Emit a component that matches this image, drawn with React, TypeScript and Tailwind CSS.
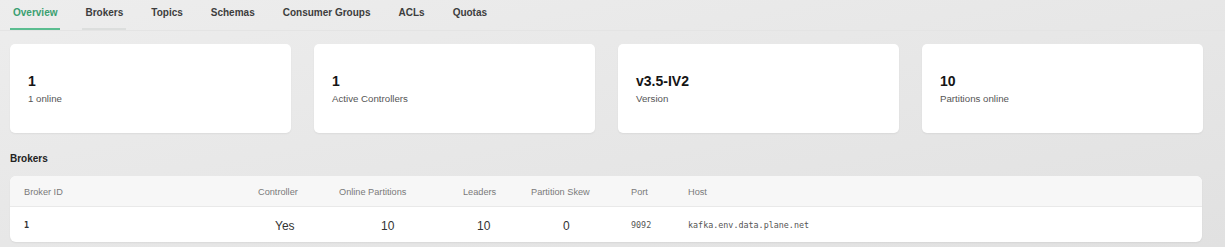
import { useState } from 'react'

const TABS = ['Overview', 'Brokers', 'Topics', 'Schemas', 'Consumer Groups', 'ACLs', 'Quotas']

const STATS = [
  { value: '1', label: '1 online' },
  { value: '1', label: 'Active Controllers' },
  { value: 'v3.5-IV2', label: 'Version' },
  { value: '10', label: 'Partitions online' },
]

const BROKERS = [
  { id: 1, controller: 'Yes', online: 10, leaders: 10, skew: 0, port: 9092, host: 'kafka.env.data.plane.net' },
]

export default function App() {
  const [tab, setTab] = useState('Overview')

  return (
    <div
      className="w-[1225px] h-[247px] overflow-hidden bg-gradient-to-br from-[#ededed] to-[#e1e1e1] font-['Liberation_Sans',Arial,sans-serif] text-[#1a1a1a]"
    >
      {/* tabs */}
      <div className="flex items-end h-[31px] pl-[10px] gap-[22px] border-b border-[#e4e4e4]">
        {TABS.map((t) => (
          <button
            key={t}
            onClick={() => setTab(t)}
            className={`h-full px-[3px] pt-[8px] text-[10px] font-bold cursor-pointer border-b-2 ${
              tab === t
                ? 'text-[#3a9f70] border-[#5bbd90]'
                : t === 'Brokers'
                  ? 'text-[#3d3d3d] border-[#dcdedd]'
                  : 'text-[#3d3d3d] border-transparent'
            }`}
          >
            <span className="block -mt-[3px] mb-[8px]">{t}</span>
          </button>
        ))}
      </div>

      {/* stat cards */}
      <div className="grid grid-cols-4 gap-[23px] pl-[10px] pr-[22px] mt-[13px]">
        {STATS.map((s, i) => (
          <div
            key={i}
            className="h-[89px] bg-white rounded-[5px] shadow-[0_1px_2px_rgba(0,0,0,0.06)] flex flex-col justify-center px-[18px]"
          >
            <div className="text-[14px] leading-[17px] font-bold text-[#151515]">{s.value}</div>
            <div className="text-[9.7px] leading-[13px] text-[#555] mt-[2px]">{s.label}</div>
          </div>
        ))}
      </div>

      {/* brokers table */}
      <div className="pl-[10px] pr-[23px]">
        <div className="text-[10px] font-bold text-[#222] mt-[18px] h-[25px]">Brokers</div>
        <div className="bg-white rounded-[6px] overflow-hidden shadow-[0_1px_2px_rgba(0,0,0,0.06)]">
          <div className="grid grid-cols-[248px_81px_124px_68px_100px_57px_1fr] h-[31px] pt-[3px] items-center bg-[#f7f7f7] border-b border-[#e9e9e9] text-[9.2px] text-[#7a7a7a]">
            <div className="pl-[14px]">Broker ID</div>
            <div>Controller</div>
            <div>Online Partitions</div>
            <div>Leaders</div>
            <div>Partition Skew</div>
            <div>Port</div>
            <div>Host</div>
          </div>
          {BROKERS.map((b) => (
            <div
              key={b.id}
              className="grid grid-cols-[248px_81px_124px_68px_100px_57px_1fr] h-[35px] pt-[2px] items-center text-[#222]"
            >
              <div className="pl-[14px] font-['DejaVu_Sans_Mono',monospace] text-[8.4px] font-bold text-[#333]">{b.id}</div>
              <div className="pl-[17px] text-[12px] text-[#333]">{b.controller}</div>
              <div className="pl-[42px] text-[12px] text-[#333]">{b.online}</div>
              <div className="pl-[14px] text-[12px] text-[#333]">{b.leaders}</div>
              <div className="pl-[32px] text-[12px] text-[#333]">{b.skew}</div>
              <div className="font-['DejaVu_Sans_Mono',monospace] text-[8.4px] text-[#555]">{b.port}</div>
              <div className="font-['DejaVu_Sans_Mono',monospace] text-[8.4px] text-[#555]">{b.host}</div>
            </div>
          ))}
        </div>
      </div>
    </div>
  )
}
